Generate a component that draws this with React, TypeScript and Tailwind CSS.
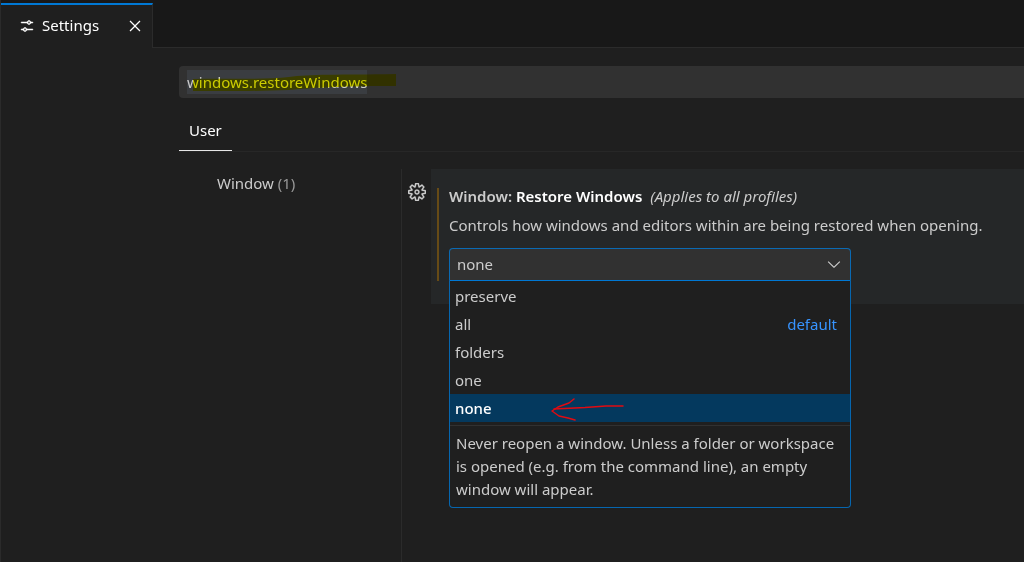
import React, { useState } from "react";
import clsx from "clsx";
import {
  VscChevronDown,
  VscClose,
  VscSettings,
  VscSettingsGear,
} from "react-icons/vsc";

interface RestoreOption {
  value: string;
  isDefault?: boolean;
}

const OPTIONS: RestoreOption[] = [
  { value: "preserve" },
  { value: "all", isDefault: true },
  { value: "folders" },
  { value: "one" },
  { value: "none" },
];

const TabBar: React.FC = () => (
  <header className="flex h-12 bg-[#181818] pt-[3px]">
    <div className="flex w-[152px] items-center border-t-2 border-r border-t-[#0078d4] border-r-[#2b2b2b] bg-[#1f1f1f] pr-[7px] pb-[2px] pl-[18px] text-white">
      <VscSettings className="size-4 shrink-0 stroke-current [stroke-width:0.5]" />
      <span className="ml-[7px] flex-1">Settings</span>
      <button type="button" aria-label="Close" className="flex size-5 items-center justify-center">
        <VscClose className="size-5" />
      </button>
    </div>
    <div className="flex-1 border-b border-[#2b2b2b]" />
  </header>
);

const SearchBox: React.FC = () => {
  const [query, setQuery] = useState("windows.restoreWindows");

  return (
    <label className="relative flex h-8 items-center rounded-l-sm bg-[#313131] pl-2">
      {/* the field is as wide as its text, so its background reads as the selection */}
      <input
        type="text"
        aria-label="Search settings"
        value={query}
        onChange={(event) => setQuery(event.target.value)}
        className="h-6 bg-[#3a3d41] text-[#cccccc] outline-none [field-sizing:content]"
      />
      <svg
        className="pointer-events-none absolute top-0 left-0 mix-blend-multiply"
        width="220"
        height="32"
        viewBox="0 0 220 32"
        aria-hidden="true"
      >
        <path d="M14 13 C50 12 85 14 110 11 C130 8 160 9 217 8 V20 H192 C150 21 130 22 110 24 L70 25 H14 Z" fill="#ffff00" />
      </svg>
    </label>
  );
};

interface OptionListProps {
  selected: string;
  onSelect: (value: string) => void;
}

const OptionList: React.FC<OptionListProps> = ({ selected, onSelect }) => (
  <div className="absolute inset-x-0 top-8 z-10 rounded-b-sm border border-[#0078d4]/80 border-t-[#0078d4] bg-[#1f1f1f] pt-px pb-[6px]">
    <ul role="listbox" aria-label="Restore Windows options">
      {OPTIONS.map((option) => (
        <li key={option.value} role="option" aria-selected={option.value === selected}>
          <button
            type="button"
            onClick={() => onSelect(option.value)}
            className={clsx(
              "flex h-7 w-full items-center justify-between pr-[13px] pl-[5px]",
              option.value === selected ? "bg-[#04395e] font-medium text-white" : "text-[#cccccc]"
            )}
          >
            <span>{option.value}</span>
            {option.isDefault && <span className="text-[#3794ff]">default</span>}
          </button>
        </li>
      ))}
    </ul>
    <p className="mt-[3px] border-t border-[#313131] px-[6px] pt-[6px] leading-[23px]">
      Never reopen a window. Unless a folder or workspace is opened (e.g. from the command line), an empty window will
      appear.
    </p>
    <svg
      className="pointer-events-none absolute top-[114px] left-[100px]"
      width="80"
      height="28"
      viewBox="0 0 80 28"
      fill="none"
      stroke="#e00b12"
      strokeWidth="1.5"
      strokeLinecap="round"
      strokeLinejoin="round"
      aria-hidden="true"
    >
      <path d="M73 11 H56 L35 12.5 L4 14" />
      <path d="M24 4 L19 8 L8 12 L2 16 L9 21 L18 23 L25 25" />
    </svg>
  </div>
);

const RestoreWindowsSetting: React.FC = () => {
  const [value, setValue] = useState("none");

  return (
    <section className="flex min-w-0 flex-1 items-start">
      <button type="button" aria-label="More actions" className="mt-[14px] ml-[6px] shrink-0">
        <VscSettingsGear className="size-[18px] stroke-current [stroke-width:0.3]" />
      </button>
      <div className="ml-[5px] min-w-0 flex-1 bg-[#252728] pt-[19px] pb-[23px] pl-[6px]">
        <div className="flow-root border-l-2 border-[#674b16] pl-[10px]">
          <h2 className="-mt-1 font-semibold leading-6">
            <span>Window: </span>
            <span className="text-white">Restore Windows</span>
            <em className="ml-2 font-normal">(Applies to all profiles)</em>
          </h2>
          <p className="mt-[5px] leading-6">
            Controls how windows and editors within are being restored when opening.
          </p>
          <div className="relative mt-[11px] max-w-[402px]">
            <select
              aria-label="Restore Windows"
              value={value}
              onChange={(event) => setValue(event.target.value)}
              className="block h-[33px] w-full appearance-none rounded-t-sm border border-[#0078d4]/80 bg-[#313131] pl-[7px] outline-none"
            >
              {OPTIONS.map((option) => (
                <option key={option.value} value={option.value}>
                  {option.value}
                </option>
              ))}
            </select>
            <VscChevronDown className="pointer-events-none absolute top-[6px] right-[7px] size-5" />
            <OptionList selected={value} onSelect={setValue} />
          </div>
        </div>
      </div>
    </section>
  );
};

const App: React.FC = () => (
  <div className="flex min-h-screen flex-col border-l border-[#2b2b2b] bg-[#1f1f1f] font-['Noto_Sans','Open_Sans',sans-serif] text-[15px] text-[#cccccc]">
    <TabBar />
    <main className="flex flex-1 flex-col pt-[18px] pl-[178px]">
      <SearchBox />
      <nav className="mt-[13px] flex border-b border-[#272727]">
        <button type="button" className="h-10 border-b border-[#e7e7e7] px-[10px] text-white">
          User
        </button>
      </nav>
      <div className="mt-[17px] flex flex-1">
        <aside className="w-[222px] shrink-0 pl-[38px]">
          <a href="#window" className="mt-[3px] block">
            Window <span className="text-[#999999]">(1)</span>
          </a>
        </aside>
        <div className="flex min-w-0 flex-1 border-l border-[#2b2b2b]">
          <RestoreWindowsSetting />
        </div>
      </div>
    </main>
  </div>
);

export default App;
